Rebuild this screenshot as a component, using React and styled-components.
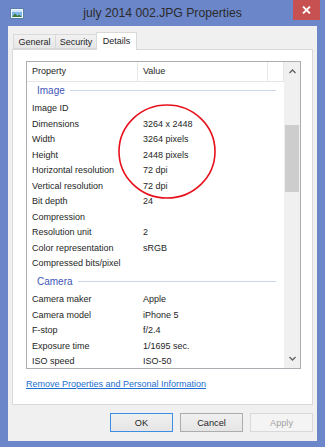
import React from "react";
import styled, { createGlobalStyle } from "styled-components";

const GlobalStyle = createGlobalStyle`
  html, body {
    margin: 0;
    padding: 0;
    background: #6b86c9;
  }
  * {
    box-sizing: border-box;
  }
`;

const imageRows = [
  { name: "Image ID", value: "" },
  { name: "Dimensions", value: "3264 x 2448" },
  { name: "Width", value: "3264 pixels" },
  { name: "Height", value: "2448 pixels" },
  { name: "Horizontal resolution", value: "72 dpi" },
  { name: "Vertical resolution", value: "72 dpi" },
  { name: "Bit depth", value: "24" },
  { name: "Compression", value: "" },
  { name: "Resolution unit", value: "2" },
  { name: "Color representation", value: "sRGB" },
  { name: "Compressed bits/pixel", value: "" },
];

const cameraRows = [
  { name: "Camera maker", value: "Apple" },
  { name: "Camera model", value: "iPhone 5" },
  { name: "F-stop", value: "f/2.4" },
  { name: "Exposure time", value: "1/1695 sec." },
  { name: "ISO speed", value: "ISO-50" },
];

const tabs = [
  { label: "General", width: 43 },
  { label: "Security", width: 42 },
  { label: "Details", width: 41, active: true },
];

const App = () => {
  return (
    <Window>
      <GlobalStyle />
      <TitleBar>
        <AppIcon viewBox="0 0 14 11">
          <rect x="0.5" y="0.5" width="13" height="10" fill="#f4f7fb" stroke="#5a7fa8" />
          <rect x="2" y="2" width="10" height="7" fill="#7fb6e6" />
          <path d="M2 9 L5 5.5 L7.5 8 L9 6.5 L12 9 Z" fill="#3d7a3a" />
          <rect x="2" y="2" width="10" height="2" fill="#cfe6fa" />
        </AppIcon>
        <Title>july 2014 002.JPG Properties</Title>
        <CloseButton>
          <svg width="9" height="8" viewBox="0 0 9 8">
            <path d="M1 0.5 L8 7.5 M8 0.5 L1 7.5" stroke="#fff" strokeWidth="1.8" />
          </svg>
        </CloseButton>
      </TitleBar>

      <Body>
        <TabStrip>
          {tabs.map((t) => (
            <Tab key={t.label} $active={t.active} $width={t.width}>
              {t.label}
            </Tab>
          ))}
        </TabStrip>

        <TabPanel>
          <ListView>
            <ListMain>
              <Header>
                <HeaderCell $width="111px">Property</HeaderCell>
                <HeaderCell $width="130px">Value</HeaderCell>
                <HeaderCell />
              </Header>
              <Rows>
                <RowsInner>
                  <Group>
                    <span>Image</span>
                    <GroupLine />
                  </Group>
                  {imageRows.map((r) => (
                    <Row key={r.name}>
                      <NameCell>{r.name}</NameCell>
                      <ValueCell>{r.value}</ValueCell>
                    </Row>
                  ))}
                  <Group>
                    <span>Camera</span>
                    <GroupLine />
                  </Group>
                  {cameraRows.map((r) => (
                    <Row key={r.name}>
                      <NameCell>{r.name}</NameCell>
                      <ValueCell>{r.value}</ValueCell>
                    </Row>
                  ))}
                </RowsInner>
              </Rows>
            </ListMain>
            <ScrollBar>
              <Arrow viewBox="0 0 7 5">
                <path d="M0.5 4 L3.5 1 L6.5 4" fill="none" stroke="#606060" strokeWidth="1.3" />
              </Arrow>
              <Track>
                <Thumb />
              </Track>
              <Arrow viewBox="0 0 7 5">
                <path d="M0.5 1 L3.5 4 L6.5 1" fill="none" stroke="#606060" strokeWidth="1.3" />
              </Arrow>
            </ScrollBar>
            <Circle viewBox="0 0 100 97">
              <ellipse cx="50" cy="48.5" rx="48" ry="46.5" fill="none" stroke="#e8101c" strokeWidth="1.6" />
            </Circle>
          </ListView>
          <RemoveLink href="#">Remove Properties and Personal Information</RemoveLink>
        </TabPanel>

        <Buttons>
          <Button $focused>OK</Button>
          <Button>Cancel</Button>
          <Button $disabled>Apply</Button>
        </Buttons>
      </Body>
    </Window>
  );
};

const Window = styled.div`
  width: 325px;
  height: 447px;
  display: flex;
  flex-direction: column;
  background: #6b86c9;
  font-family: "Liberation Sans", Arial, sans-serif;
  color: #1e1e1e;
`;

const TitleBar = styled.div`
  height: 27px;
  display: grid;
  grid-template-columns: 1fr auto 1fr;
  align-items: start;
`;

const AppIcon = styled.svg`
  width: 14px;
  height: 11px;
  margin: 8px 0 0 10px;
`;

const Title = styled.div`
  font-size: 12.2px;
  line-height: 26px;
  color: #2b2b2b;
  white-space: nowrap;
`;

const CloseButton = styled.div`
  justify-self: end;
  margin-right: 5px;
  width: 27px;
  height: 20px;
  background: #c75050;
  display: flex;
  align-items: center;
  justify-content: center;
`;

const Body = styled.div`
  flex: 1;
  margin: 0 8px 6px 8px;
  background: #f0f0f0;
  padding: 6px 4px 9px 4px;
  display: flex;
  flex-direction: column;
`;

const TabStrip = styled.div`
  display: flex;
  align-items: flex-end;
  padding-left: 2px;
  height: 17px;
  position: relative;
  z-index: 1;
`;

const Tab = styled.div`
  width: ${(p) => p.$width}px;
  height: ${(p) => (p.$active ? "18px" : "15px")};
  margin-bottom: ${(p) => (p.$active ? "-1px" : "0")};
  padding-top: ${(p) => (p.$active ? "2px" : "1px")};
  border: 1px solid #d9d9d9;
  border-bottom: ${(p) => (p.$active ? "none" : "1px solid #d9d9d9")};
  margin-left: -1px;
  background: ${(p) => (p.$active ? "#fff" : "linear-gradient(#f2f2f2, #e6e6e6)")};
  text-align: center;
  font-size: 9px;
  line-height: 12px;
  color: #1e1e1e;
`;

const TabPanel = styled.div`
  height: 356px;
  background: #fff;
  border: 1px solid #d9d9d9;
  padding: 11px 11px 0 13px;
  display: flex;
  flex-direction: column;
`;

const ListView = styled.div`
  position: relative;
  height: 308px;
  border: 1px solid #abadb3;
  display: flex;
`;

const ListMain = styled.div`
  flex: 1;
  display: flex;
  flex-direction: column;
  overflow: hidden;
`;

const Header = styled.div`
  height: 20px;
  display: flex;
  border-bottom: 1px solid #e5e5e5;
`;

const HeaderCell = styled.div`
  width: ${(p) => p.$width || "auto"};
  flex: ${(p) => (p.$width ? "none" : "1")};
  padding-left: 5px;
  border-right: 1px solid #e8e8e8;
  font-size: 9px;
  line-height: 19px;
`;

const Rows = styled.div`
  flex: 1;
  overflow: hidden;
`;

const RowsInner = styled.div`
  margin-top: -2px;
`;

const Group = styled.div`
  height: 20.5px;
  display: flex;
  align-items: center;
  gap: 5px;
  padding: 1px 8px 0 10px;
  font-size: 10px;
  color: #4356b8;
`;

const GroupLine = styled.div`
  flex: 1;
  height: 1px;
  background: #cad7ee;
`;

const Row = styled.div`
  height: 15.5px;
  display: flex;
  align-items: center;
  font-size: 9px;
`;

const NameCell = styled.div`
  width: 111px;
  padding-left: 5px;
  white-space: nowrap;
`;

const ValueCell = styled.div`
  padding-left: 5px;
  white-space: nowrap;
`;

const ScrollBar = styled.div`
  width: 16px;
  background: #f0f0f0;
  display: flex;
  flex-direction: column;
  align-items: center;
`;

const Arrow = styled.svg`
  width: 7px;
  height: 5px;
  margin: 7px 0;
`;

const Track = styled.div`
  flex: 1;
  width: 100%;
  padding: 0 1px;
`;

const Thumb = styled.div`
  margin-top: 44px;
  height: 67px;
  background: #cdcdcd;
`;

const Circle = styled.svg`
  position: absolute;
  left: 90px;
  top: 41px;
  width: 100px;
  height: 97px;
  pointer-events: none;
`;

const RemoveLink = styled.a`
  margin-top: 10px;
  font-size: 9px;
  color: #1a6fd1;
  text-decoration: underline;
  align-self: flex-start;
`;

const Buttons = styled.div`
  margin-top: 8px;
  display: flex;
  justify-content: flex-end;
  gap: 7px;
`;

const Button = styled.div`
  width: 63px;
  height: 19px;
  display: flex;
  align-items: center;
  justify-content: center;
  font-size: 9.2px;
  color: ${(p) => (p.$disabled ? "#a3a3a3" : "#1e1e1e")};
  background: ${(p) => (p.$disabled ? "#f4f4f4" : "linear-gradient(#f0f0f0, #e5e5e5)")};
  border: 1px solid
    ${(p) => (p.$focused ? "#3c8fe0" : p.$disabled ? "#d9d9d9" : "#acacac")};
`;

export default App;
